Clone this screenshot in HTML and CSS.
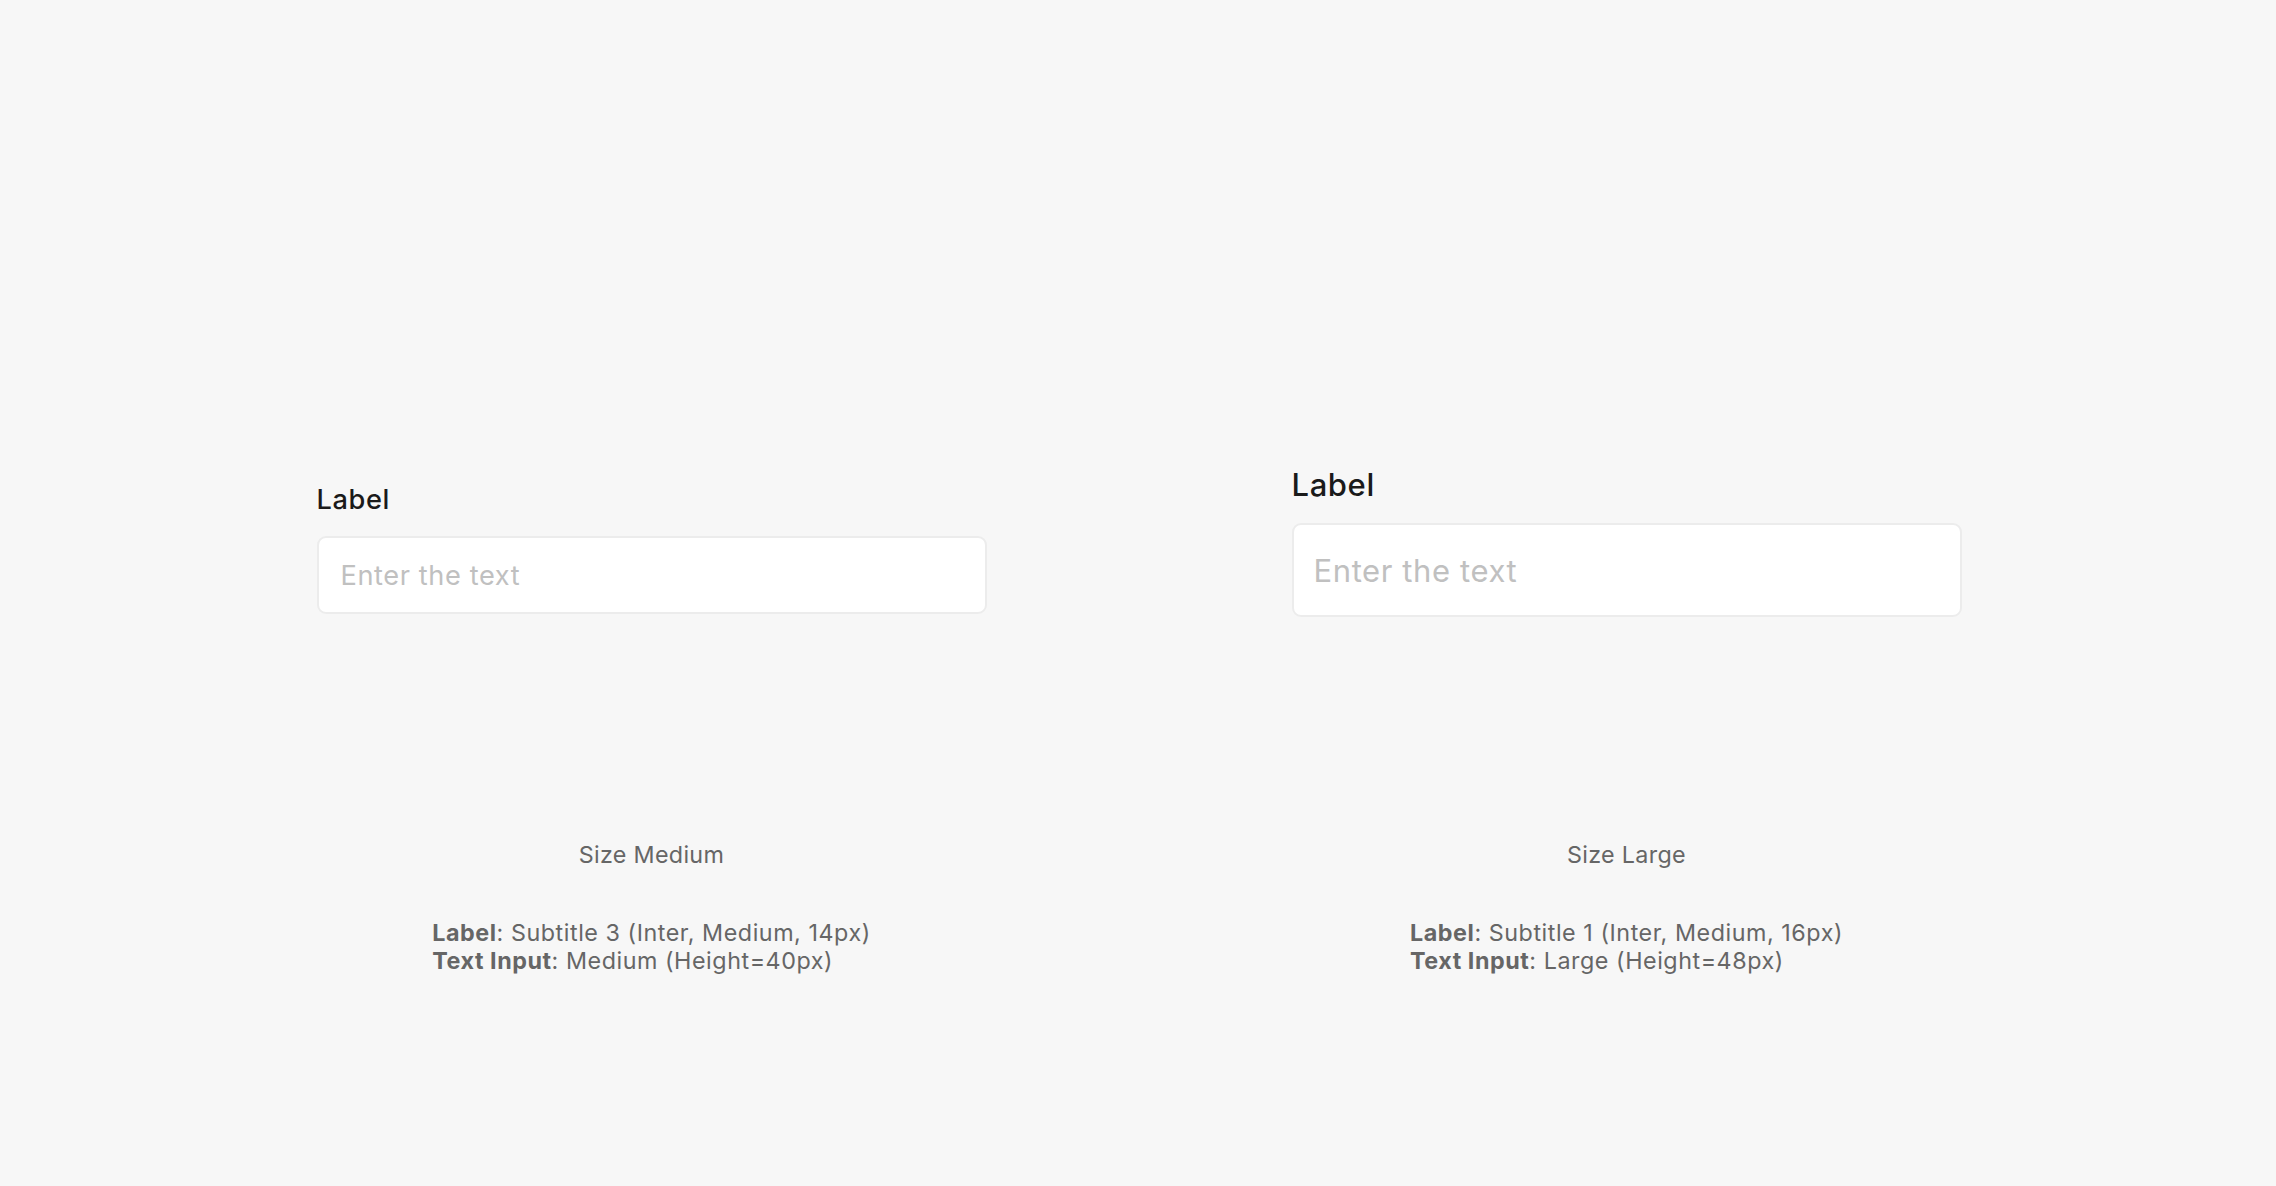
FILE: index.html
```html
<!DOCTYPE html>
<html lang="en">
<head>
<meta charset="utf-8">
<title>Text Input Sizes</title>
<link rel="stylesheet" href="styles.css">
</head>
<body>
<main class="page">
  <section class="col">
    <div class="stage stage--md">
      <label class="label label--md" for="in-md">Label</label>
      <input id="in-md" class="input input--md" type="text" placeholder="Enter the text">
    </div>
    <p class="size">Size Medium</p>
    <p class="desc"><b>Label</b>: Subtitle 3 (Inter, Medium, 14px)<br><b>Text Input</b>: Medium (Height=40px)</p>
  </section>
  <section class="col">
    <div class="stage stage--lg">
      <label class="label label--lg" for="in-lg">Label</label>
      <input id="in-lg" class="input input--lg" type="text" placeholder="Enter the text">
    </div>
    <p class="size">Size Large</p>
    <p class="desc"><b>Label</b>: Subtitle 1 (Inter, Medium, 16px)<br><b>Text Input</b>: Large (Height=48px)</p>
  </section>
</main>
</body>
</html>
```

FILE: styles.css
```css
html, body {
  margin: 0;
  padding: 0;
}
body {
  background: #f7f7f7;
  font-family: Inter, "Noto Sans", sans-serif;
  color: #1a1a1a;
}
.page {
  display: grid;
  grid-template-columns: 1fr 1fr;
  padding: 0 162px 0 164px;
  height: 1186px;
  box-sizing: border-box;
}
.col {
  display: flex;
  flex-direction: column;
  align-items: center;
}
.stage {
  height: 841px;
  box-sizing: border-box;
  display: flex;
  flex-direction: column;
}
.stage--md {
  width: 670px;
  padding-top: 483px;
}
.stage--lg {
  width: 670px;
  padding-top: 466px;
}
.label {
  display: block;
  font-weight: 500;
  color: #1a1a1a;
  margin-bottom: 20px;
  letter-spacing: 0.6px;
}
.label--md {
  font-size: 27.2px;
  line-height: 33px;
}
.label--lg {
  font-size: 31px;
  line-height: 37px;
}
.input {
  box-sizing: border-box;
  width: 100%;
  margin: 0;
  background: #ffffff;
  border: 2px solid #ececec;
  border-radius: 9px;
  font-family: Inter, "Noto Sans", sans-serif;
  font-weight: 400;
  color: #1a1a1a;
  letter-spacing: 0.6px;
  outline: none;
}
.input::placeholder {
  color: #c0c0c0;
  opacity: 1;
}
.input--md {
  height: 78px;
  padding: 0 22px;
  font-size: 27.2px;
}
.input--lg {
  height: 94px;
  padding: 0 20px;
  font-size: 31px;
}
.size {
  margin: 0 0 50px;
  font-size: 23.3px;
  line-height: 28px;
  color: #666666;
  text-align: center;
  letter-spacing: 0.3px;
}
.desc {
  margin: 0;
  font-size: 23.3px;
  line-height: 28px;
  color: #666666;
  text-align: left;
  letter-spacing: 0.55px;
}
.desc b {
  font-weight: 700;
}
```
